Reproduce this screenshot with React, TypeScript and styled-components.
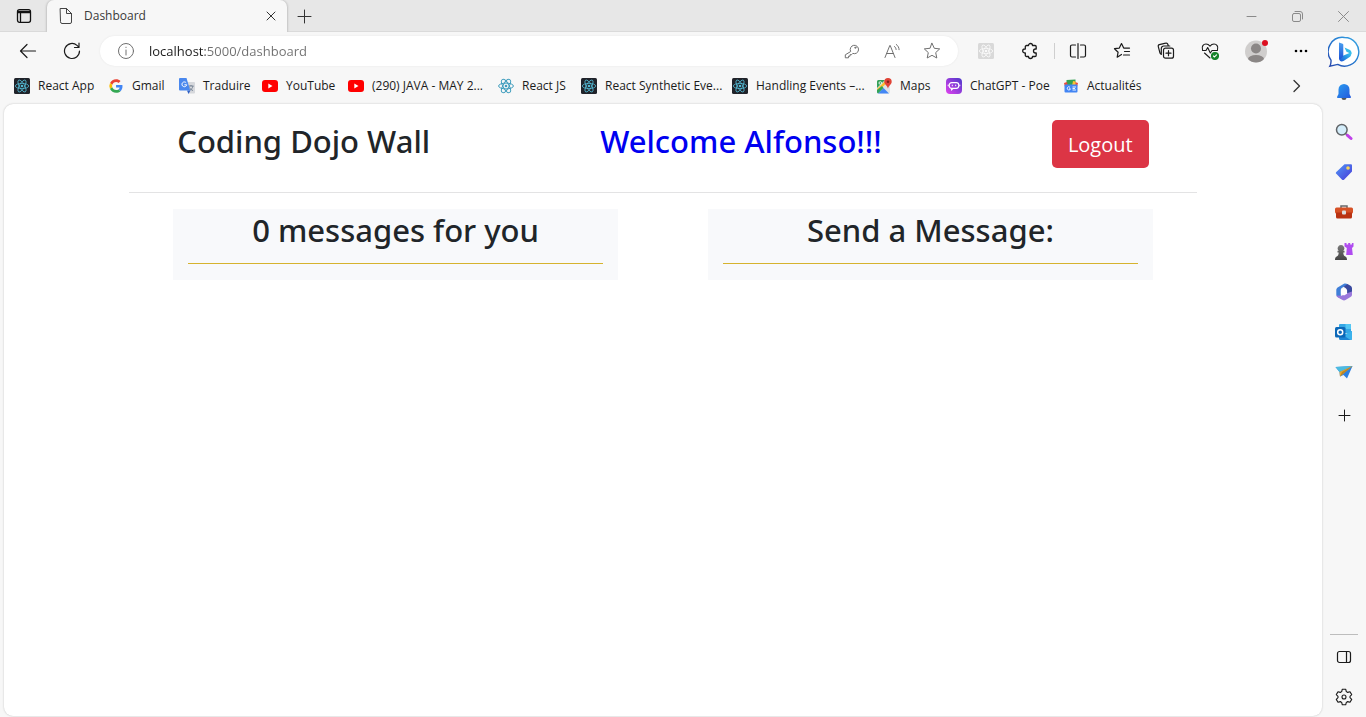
import React from 'react';
import styled, { createGlobalStyle } from 'styled-components';

const GlobalStyle = createGlobalStyle`
  *, *::before, *::after { box-sizing: border-box; }
  body {
    margin: 0;
    background: #f7f7f7;
    color: #1b1b1b;
    font-family: "Open Sans", "Noto Sans", sans-serif;
    font-size: 12px;
  }
  button { font: inherit; color: inherit; }
  svg { display: block; flex: none; }
`;

const Window = styled.div`
  display: flex;
  flex-direction: column;
  min-height: 100vh;
`;

const TitleBar = styled.header`
  display: flex;
  height: 32px;
  background: #e7e7e7;
  box-shadow: inset 0 -1px 0 #dadada;
`;

const IconButton = styled.button<{ $w?: number; $h?: number }>`
  display: flex;
  flex: none;
  align-items: center;
  justify-content: center;
  width: ${(p) => p.$w ?? 44}px;
  height: ${(p) => p.$h ?? 32}px;
  padding: 0;
  border: 0;
  background: none;
`;

const Tab = styled.div`
  display: flex;
  align-items: center;
  width: 240px;
  padding-left: 11px;
  background: #f7f7f7;
  border-radius: 7px 7px 0 0;
  box-shadow: -1px 0 2px #c4c4c4, 1px 0 2px #c4c4c4;
  clip-path: inset(0 -3px);
`;

const TabTitle = styled.span`
  flex: 1;
  padding-left: 10px;
  color: #3a3a3a;
  line-height: 16px;
`;

const WindowControls = styled.div`
  display: flex;
  margin-left: auto;
  color: #8a8a8a;
`;

const Body = styled.div`
  display: flex;
  flex: 1;
`;

const Main = styled.div`
  display: flex;
  flex: 1;
  flex-direction: column;
  min-width: 0;
`;

const Toolbar = styled.div`
  display: flex;
  align-items: center;
  height: 38px;
  padding-left: 6px;
`;

const AddressBar = styled.div`
  display: flex;
  flex: 1;
  align-items: center;
  height: 30px;
  margin: 0 6px;
  padding: 0 6px 0 17px;
  background: #fff;
  border-radius: 15px;
  box-shadow: 0 0 2px #e4e4e4;
`;

const AddressInput = styled.input`
  flex: 1;
  min-width: 0;
  margin-left: 14px;
  padding: 0;
  border: 0;
  outline: 0;
  font: 13px "Open Sans", "Noto Sans", sans-serif;
  color: transparent;
  background: linear-gradient(90deg, #1b1b1b 56px, #6f6f6f 56px);
  background-clip: text;
  -webkit-background-clip: text;
`;

const Separator = styled.span`
  width: 1px;
  height: 16px;
  margin: 0 1px 0 2px;
  background: #cfcfcf;
`;

const Bookmarks = styled.nav`
  display: flex;
  align-items: center;
  height: 34px;
  padding: 0 0 2px 14px;
`;

const Bookmark = styled.a<{ $w: number }>`
  display: flex;
  flex: none;
  align-items: center;
  gap: 8px;
  width: ${(p) => p.$w}px;
  color: #1b1b1b;
  font-size: 12px;
  line-height: 16px;
  text-decoration: none;
  white-space: nowrap;
`;

const MoreBookmarks = styled(IconButton)`
  margin-left: auto;
  margin-right: 10px;
`;

const Viewport = styled.main`
  flex: 1;
  margin: 0 1px 1px 4px;
  background: #fff;
  border-radius: 9px;
  box-shadow: 0 0 2px #bdbdbd;
`;

const Container = styled.div`
  width: 81%;
  margin: 0 auto;
  color: #212529;
`;

const Heading = styled.h2<{ $color?: string }>`
  margin: 0;
  color: ${(p) => p.$color ?? '#212529'};
  font: 500 31px/42px "Noto Sans", "Open Sans", sans-serif;
  text-align: center;
  white-space: nowrap;
`;

const PageHeader = styled.header`
  display: flex;
  align-items: flex-start;
  justify-content: space-between;
  padding: 16px 48px 24px;
  border-bottom: 1px solid #e3e3e4;
`;

const LogoutButton = styled.button`
  width: 97px;
  height: 48px;
  padding: 2px 0 0;
  border: 0;
  border-radius: 5px;
  background: #dc3545;
  color: #fff;
  font: 20px/30px "Open Sans", "Noto Sans", sans-serif;
`;

const Columns = styled.div`
  display: flex;
  justify-content: space-between;
  padding: 16px 44px 0;
`;

const Card = styled.section`
  width: 45.4%;
  padding: 0 15px 16px;
  background: #f8f9fb;
`;

const CardHeading = styled.div`
  padding-bottom: 12px;
  border-bottom: 1px solid #d6b32e;
`;

const Sidebar = styled.aside`
  display: flex;
  flex-direction: column;
  width: 43px;
`;

const SidebarFoot = styled.div`
  display: flex;
  flex-direction: column;
  margin: auto 0 0 7px;
  width: 28px;
  align-items: center;
  padding-top: 2px;
  border-top: 1px solid #bdbdbd;
`;

const Line = ({ size = 16, w = 1, color = 'currentColor', children }: { size?: number; w?: number; color?: string; children: React.ReactNode }) => (
  <svg width={size} height={size} viewBox={`0 0 ${size} ${size}`} fill="none" stroke={color} strokeWidth={w} strokeLinecap="round" strokeLinejoin="round">
    {children}
  </svg>
);

const Atom = ({ color, bg }: { color: string; bg?: string }) => (
  <svg width="16" height="16" viewBox="0 0 16 16" fill="none" stroke={color} strokeWidth={bg ? 0.8 : 1}>
    {bg && <rect width="16" height="16" rx="1.5" fill={bg} stroke="none" />}
    {[0, 60, 120].map((a) => (
      <ellipse key={a} cx="8" cy="8" rx={bg ? 6.7 : 7.4} ry={bg ? 2.6 : 2.9} transform={`rotate(${a} 8 8)`} />
    ))}
    <circle cx="8" cy="8" r="1.3" fill={color} stroke="none" />
  </svg>
);

const DarkAtom = () => <Atom color="#53b9d3" bg="#20232a" />;

const GoogleG = () => (
  <svg width="16" height="16" viewBox="0 0 48 48">
    <g transform="translate(4 4) scale(.84)">
      <path fill="#ea4335" d="M24 9.5c3.5 0 6.700 1.200 9.200 3.600l6.900-6.900C35.900 2.400 30.500 0 24 0 14.600 0 6.500 5.400 2.600 13.200l8 6.200C12.400 13.700 17.700 9.500 24 9.500z" />
      <path fill="#4285f4" d="M47 24.500c0-1.600-.2-3.100-.4-4.500H24v9h12.900c-.6 3-2.300 5.500-4.800 7.200l7.700 6C44.400 38 47 32 47 24.500z" />
      <path fill="#fbbc05" d="M10.500 28.600a14.500 14.500 0 0 1 0-9.200l-8-6.200a24 24 0 0 0 0 21.600z" />
      <path fill="#34a853" d="M24 48c6.500 0 11.900-2.100 15.900-5.800l-7.700-6c-2.200 1.500-4.900 2.300-8.200 2.300-6.300 0-11.600-4.200-13.500-9.900l-8 6.200C6.500 42.600 14.600 48 24 48z" />
    </g>
  </svg>
);

const Translate = () => (
  <svg width="16" height="16" viewBox="0 0 16 16" fill="none">
    <path d="M6 4h9a1 1 0 0 1 1 1v9.500a1 1 0 0 1-1 1h-5z" fill="#d6d8dc" />
    <path d="M9.500 8h5M12 7v1M14 8c-.4 2-1.800 3.500-3.500 4.500M10.500 9.500c.8 1.500 2 2.500 3.500 3" stroke="#6b7a8c" strokeWidth=".9" />
    <path d="M8 12.500h3.500L9.500 16z" fill="#2f5fc4" />
    <path d="M1 0h6.500l3.700 12.500H1a1 1 0 0 1-1-1V1a1 1 0 0 1 1-1z" fill="#4a88ee" />
    <path d="M7.200 4.800a2.400 2.400 0 1 0 .5 2H5.400" stroke="#fff" strokeWidth="1" />
  </svg>
);

const YouTube = () => (
  <svg width="16" height="16" viewBox="0 0 16 16">
    <rect y="2" width="16" height="12" rx="3" fill="#f00" />
    <path d="M6.300 5.500v5l4.200-2.500z" fill="#fff" />
  </svg>
);

const Maps = () => (
  <svg width="16" height="16" viewBox="0 0 16 16">
    <rect x="1" y="2" width="13" height="13.500" rx="1.500" fill="#dfe3e6" />
    <path d="M2.500 2H9L1 10V3.500A1.500 1.500 0 0 1 2.500 2z" fill="#34a058" />
    <path d="M1 11l9-9 2 2-11 10z" fill="#fbc02d" />
    <path d="M2 15.500l5.500-5.500 5.500 5.500z" fill="#4387f5" />
    <path d="M1 12v2.500l1 1 5.500-5.500-1.500-2z" fill="#2fa35b" />
    <circle cx="4.300" cy="5" r="1.300" fill="none" stroke="#fff" strokeWidth=".8" />
    <path d="M12 0a3.700 3.700 0 0 1 3.700 3.700c0 2.500-3 3.500-3.700 7-.7-3.500-3.700-4.500-3.700-7A3.700 3.700 0 0 1 12 0z" fill="#e04336" />
    <circle cx="12" cy="3.700" r="1.300" fill="#80201b" />
  </svg>
);

const Poe = () => (
  <svg width="16" height="16" viewBox="0 0 16 16">
    <defs>
      <linearGradient id="poe" x1="0" x2="1" y1="1" y2="0">
        <stop stopColor="#e142ee" />
        <stop offset="1" stopColor="#4b38c9" />
      </linearGradient>
    </defs>
    <rect width="16" height="16" rx="4" fill="url(#poe)" />
    <rect x="3.200" y="4.700" width="9.600" height="5.600" rx="2.500" fill="none" stroke="#fff" strokeWidth="1.200" />
    <path d="M6.300 6.700v1.500M9.700 6.700v1.500M2.200 6.700v1.500M13.800 6.700v1.500" stroke="#fff" />
    <path d="M5 10.500h3l-3 2.500z" fill="#fff" />
  </svg>
);

const News = () => (
  <svg width="16" height="16" viewBox="0 0 16 16">
    <path d="M3.500 2l9-.5v6h-9z" fill="#35a052" />
    <path d="M1 5l3-1 1 5H2zM12 4l3 1-1 4-3-1z" fill="#ea4b3c" />
    <path d="M10 3l2.500.5V8H9z" fill="#fbc234" />
    <rect x="1.500" y="6.500" width="13" height="8" rx="1" fill="#4285f4" />
    <path d="M7 9.300a1.600 1.600 0 1 0 .4 1.500H6M9.500 9h3.500M9.500 10.500h2.500M9.500 12h3.500" stroke="#fff" strokeWidth=".9" fill="none" />
  </svg>
);

const ReadAloud = () => (
  <Line size={18} color="#707070">
    <path d="M2 15.500L6.800 3.500h.4l4.800 12M3.600 11.500h6.800M11.500 4.500c1 .8 1.500 1.800 1.600 3M13.300 2.500c1.800 1.300 2.700 3 2.800 5.200" />
  </Line>
);

const Avatar = () => (
  <svg width="24" height="24" viewBox="0 0 24 24">
    <defs>
      <clipPath id="face"><circle cx="12" cy="12.500" r="11" /></clipPath>
    </defs>
    <circle cx="12" cy="12.500" r="11" fill="#d0cecd" />
    <g clipPath="url(#face)" fill="#8b8786">
      <circle cx="12" cy="9.500" r="5" />
      <ellipse cx="12" cy="20" rx="8" ry="4" />
    </g>
    <circle cx="21" cy="4" r="3" fill="#dc0f20" />
  </svg>
);

const Bing = () => (
  <svg width="32" height="32" viewBox="0 0 32 32">
    <defs>
      <linearGradient id="ring" x1="0" x2="1" y1="1" y2="0">
        <stop stopColor="#2846ab" />
        <stop offset=".5" stopColor="#2478cf" />
        <stop offset="1" stopColor="#3ba9e4" />
      </linearGradient>
      <linearGradient id="stem" x1="0" x2="0" y1="0" y2="1">
        <stop stopColor="#4a9ff0" />
        <stop offset="1" stopColor="#1c52d6" />
      </linearGradient>
      <linearGradient id="bowl" x1="0" x2="1" y1="1" y2="0">
        <stop stopColor="#1b50d4" />
        <stop offset=".4" stopColor="#2386e0" />
        <stop offset="1" stopColor="#3fd0ef" />
      </linearGradient>
    </defs>
    <path d="M16.500 1.500a14.300 14.300 0 1 1-6.800 26.900L1.800 30.300c1-2 1.400-4 1.200-6.200A14.300 14.300 0 0 1 16.500 1.500z" fill="#fff" stroke="url(#ring)" strokeWidth="1.400" />
    <path d="M11 22.500l4.500-3 7.700-3.200c.5 2.500-.3 4-1.900 5L15.500 25c-2.500 1.300-4.500-.5-4.500-2.500z" fill="url(#bowl)" />
    <path d="M11 6.500l3.600 1.300c.5.200.7.500.7 1V20.500L12.500 23c-1 .6-1.500.2-1.500-.8z" fill="url(#stem)" />
    <path d="M16.500 11.500l5 2.200c1.700.9 2.200 2.500 2 4.300L18.500 15.700z" fill="#37bce9" />
  </svg>
);

const Bell = () => (
  <svg width="18" height="18" viewBox="0 0 18 18">
    <defs>
      <linearGradient id="bell" x1="0" x2="1" y1="0" y2="1">
        <stop stopColor="#2a9cf0" />
        <stop offset="1" stopColor="#2459dc" />
      </linearGradient>
    </defs>
    <path d="M6.500 15h5a2.500 2 0 0 1-5 0z" fill="#555" />
    <path d="M9 1a5.500 5.500 0 0 1 5.500 5.500V11l1.500 3c0 .8-.5 1-1 1H3c-.5 0-1-.2-1-1l1.500-3V6.500A5.500 5.500 0 0 1 9 1z" fill="url(#bell)" />
  </svg>
);

const Magnifier = () => (
  <svg width="18" height="18" viewBox="0 0 18 18">
    <path d="M11 11l1.500 1.500" stroke="#505358" strokeWidth="2" />
    <path d="M12.500 12.300L16 15.500" stroke="#c040ea" strokeWidth="3" strokeLinecap="round" />
    <circle cx="6.800" cy="6.800" r="5.300" fill="#d4edfa" stroke="#606468" strokeWidth="1.500" />
  </svg>
);

const Tag = () => (
  <svg width="18" height="18" viewBox="0 0 18 18">
    <defs>
      <linearGradient id="tag" x1="0" x2="1" y1="0" y2="1">
        <stop stopColor="#5298f6" />
        <stop offset="1" stopColor="#4838d8" />
      </linearGradient>
    </defs>
    <path d="M9.500 1.300h6.200c.8 0 1.300.5 1.300 1.300v5.900L9 16.700c-.6.5-1.300.5-1.900 0l-5.800-5.900c-.6-.6-.6-1.300 0-1.900z" fill="url(#tag)" />
    <circle cx="13" cy="5" r="1.800" fill="#f8d458" />
  </svg>
);

const Toolbox = () => (
  <svg width="18" height="18" viewBox="0 0 18 18">
    <path d="M6 5V3h6v2" stroke="#68686a" strokeWidth="1.500" fill="none" />
    <rect y="4.500" width="18" height="6" rx="1.500" fill="#d65126" />
    <path d="M1 9.500h16v4.500a1.500 1.500 0 0 1-1.500 1.500h-13A1.500 1.500 0 0 1 1 14z" fill="#b93212" />
    <rect x="7" y="7.500" width="4" height="4" rx="1" fill="#ddd" />
  </svg>
);

const Chess = () => (
  <svg width="20" height="20" viewBox="0 0 20 20">
    <defs>
      <linearGradient id="pawn" x1="0" x2="0" y1="0" y2="1">
        <stop stopColor="#7a7a7a" />
        <stop offset="1" stopColor="#444" />
      </linearGradient>
    </defs>
    <path d="M10.500 1h2v1.500h1.700V1h2v1.500h1.700V1h1.600v3.500L18 6l.8 7h-6.600l.6-7-2.300-1.500z" fill="#b04cf0" />
    <path d="M7 3a3.300 3.300 0 0 1 2.200 5.800h1.300v1.800H9.300c0 2 .5 3.200 2 3.900 1.200.6 1.700 1.600 1.700 3.500H1c0-1.900.5-2.900 1.700-3.500 1.500-.7 2-1.900 2-3.900H3.500V8.800h1.300A3.300 3.300 0 0 1 7 3z" fill="url(#pawn)" />
  </svg>
);

const Office = () => (
  <svg width="18" height="18" viewBox="0 0 18 18">
    <path d="M9 .8L3 4.200c-1 .6-1.700 1.600-1.700 2.800v4.500c0 1.200.5 2 1.500 2.600l3 1.500V7c0-1 .5-1.700 1.300-2.200L13 1.500C11.500.6 10.300.1 9 .8z" fill="#3f7fd8" />
    <path d="M12.500 1l3 1.700c1 .6 1.500 1.600 1.500 2.800V11l-5 .5V7.500c0-1-.4-1.700-1.200-2.200L8.500 3.800z" fill="#39499f" />
    <path d="M1.500 12.500l5 .2 5.500-2.500 5-1.700v3c0 1-.5 2-1.500 2.600l-5 2.900c-1 .5-2 .5-3 0L3 14.500c-.8-.5-1.300-1-1.500-2z" fill="#9a78dc" />
    <path d="M9 5.400l3.100 1.800v3.600L9 12.600l-3.100-1.800V7.200z" fill="#fff" />
  </svg>
);

const Outlook = () => (
  <svg width="18" height="18" viewBox="0 0 18 18">
    <rect x="4" y="1" width="12" height="9" rx="1" fill="#35a7e5" />
    <path d="M10.500 1H15a1 1 0 0 1 1 1v4h-5.500z" fill="#54c8f4" />
    <path d="M4 9l6 4 7-5v7.500a1.500 1.500 0 0 1-1.500 1.500h-10A1.500 1.500 0 0 1 4 15.500z" fill="#1d85d4" />
    <path d="M17 8v7.500a1.500 1.500 0 0 1-1.500 1.500L8 12z" fill="#3bb2ec" />
    <rect x="0" y="4" width="10.500" height="10.500" rx="1.500" fill="#0c68b8" />
    <circle cx="5.200" cy="9.200" r="2.500" fill="none" stroke="#fff" strokeWidth="1.500" />
  </svg>
);

const Plane = () => (
  <svg width="18" height="18" viewBox="0 0 18 18">
    <path d="M.5 4L17.500 3 12 15.500 8.500 12 5 13.500 4.500 9z" fill="#2c81e2" />
    <path d="M.5 4L17.500 3 4.500 9z" fill="#4cbce0" />
    <path d="M17.500 3L4.500 9 5 13.500z" fill="#eba92b" />
    <path d="M17.500 3L5 13.500l2-4.500z" fill="#b88528" />
  </svg>
);

const Gear = () => (
  <Line size={18} w={1.1}>
    <path d="M7.300 1.200h3.400l.6 2.400 1.400.8 2.300-.7 1.700 2.900-1.700 1.700v1.400l1.700 1.700-1.700 2.900-2.300-.7-1.400.8-.6 2.400H7.300l-.6-2.400-1.400-.8-2.300.7-1.700-2.900L3 9.700V8.300L1.300 6.600 3 3.700l2.300.7 1.400-.8z" />
    <circle cx="9" cy="9" r="2" />
  </Line>
);

const bookmarks: { label: string; width: number; icon: React.ReactNode }[] = [
  { label: 'React App', width: 94, icon: <DarkAtom /> },
  { label: 'Gmail', width: 71, icon: <GoogleG /> },
  { label: 'Traduire', width: 83, icon: <Translate /> },
  { label: 'YouTube', width: 86, icon: <YouTube /> },
  { label: '(290) JAVA - MAY 2...', width: 150, icon: <YouTube /> },
  { label: 'React JS', width: 83, icon: <Atom color="#3f9dbd" /> },
  { label: 'React Synthetic Eve...', width: 151, icon: <DarkAtom /> },
  { label: 'Handling Events –...', width: 144, icon: <DarkAtom /> },
  { label: 'Maps', width: 70, icon: <Maps /> },
  { label: 'ChatGPT - Poe', width: 117, icon: <Poe /> },
  { label: 'Actualités', width: 90, icon: <News /> },
];

const apps: [string, React.ReactNode][] = [
  ['Notifications', <Bell />],
  ['Search', <Magnifier />],
  ['Shopping', <Tag />],
  ['Tools', <Toolbox />],
  ['Games', <Chess />],
  ['Microsoft 365', <Office />],
  ['Outlook', <Outlook />],
  ['Drop', <Plane />],
];

export default function App() {
  return (
    <Window>
      <GlobalStyle />
      <TitleBar>
        <IconButton $w={47} aria-label="Tab actions">
          <Line size={16} w={1.3} color="#111">
            <rect x="1.500" y="1.700" width="13" height="12.600" rx="2" />
            <path d="M2 3.300h12M2 4.500h12M4.500 5.500v8" />
          </Line>
        </IconButton>
        <Tab>
          <Line size={16} color="#444">
            <path d="M2.500 .500h6l5 5v8.500a1.500 1.500 0 0 1-1.500 1.500H4A1.500 1.500 0 0 1 2.500 14zM8.500 .500v5h5" />
          </Line>
          <TabTitle>Dashboard</TabTitle>
          <IconButton $w={32} aria-label="Close tab">
            <Line size={10} color="#333"><path d="M1 1l8 8M9 1l-8 8" /></Line>
          </IconButton>
        </Tab>
        <IconButton $w={34} aria-label="New tab">
          <Line size={15} color="#333"><path d="M7.500 1v13M1 7.500h13" /></Line>
        </IconButton>
        <WindowControls>
          <IconButton $w={46} aria-label="Minimize">
            <Line size={11}><path d="M1 5.500h9" /></Line>
          </IconButton>
          <IconButton $w={46} aria-label="Restore">
            <Line size={11}><rect x=".5" y="2.500" width="8" height="8" rx="1.500" /><path d="M3 .500h5a2.500 2.500 0 0 1 2.500 2.500v5" /></Line>
          </IconButton>
          <IconButton $w={46} aria-label="Close">
            <Line size={11}><path d="M.5.500l10 10M10.500.500l-10 10" /></Line>
          </IconButton>
        </WindowControls>
      </TitleBar>

      <Body>
        <Main>
          <Toolbar>
            <IconButton aria-label="Back">
              <Line size={18} w={1.2}><path d="M16.500 9h-15M8 2.500L1.500 9 8 15.500" /></Line>
            </IconButton>
            <IconButton aria-label="Refresh">
              <Line size={18} w={1.2}><path d="M16.500 9A7.500 7.500 0 1 1 14 3.400l1.800 1.800M16 1v4.500h-4.500" /></Line>
            </IconButton>
            <AddressBar>
              <Line size={18} color="#707070"><circle cx="9" cy="9" r="7.500" /><path d="M9 8v5M9 5.200v.3" /></Line>
              <AddressInput aria-label="Address" defaultValue="localhost:5000/dashboard" />
              <IconButton $w={40} $h={30} aria-label="Passwords">
                <Line size={16} color="#707070">
                  <path d="M6.500 8.200a4.200 4.200 0 1 1 2.300 2.200L7.500 11.700H6v1.500H4.500v1.600H1.300v-2.600z" />
                  <circle cx="11.300" cy="4.700" r=".6" />
                </Line>
              </IconButton>
              <IconButton $w={40} $h={30} aria-label="Read aloud"><ReadAloud /></IconButton>
              <IconButton $w={40} $h={30} aria-label="Add to favorites">
                <Line size={18} color="#707070"><path d="M9 1.300l2.300 5 5.400.6-4 3.700 1.100 5.400L9 13.300 4.200 16l1.100-5.400-4-3.700 5.400-.6z" /></Line>
              </IconButton>
            </AddressBar>
            <IconButton aria-label="React Developer Tools"><Atom color="#fafafa" bg="#d9d9d9" /></IconButton>
            <IconButton aria-label="Extensions">
              <Line size={18} w={1.3}>
                <path d="M5.500 3.500h2a2 2 0 0 1 4 0H14a1.200 1.200 0 0 1 1.200 1.200V7h-.7a2 2 0 0 0 0 4h.7v2.300a1.200 1.200 0 0 1-1.200 1.200h-2.500a2 2 0 0 1-4 0h-2a1.200 1.200 0 0 1-1.200-1.200V11h-.6a2 2 0 0 1 0-4h.6V4.700A1.200 1.200 0 0 1 5.500 3.500z" />
              </Line>
            </IconButton>
            <Separator />
            <IconButton aria-label="Split screen">
              <Line size={18} w={1.2}><path d="M6.500 3H3a1.500 1.500 0 0 0-1.500 1.500v9A1.500 1.500 0 0 0 3 15h3.500M11.500 3H15a1.500 1.500 0 0 1 1.500 1.500v9A1.500 1.500 0 0 1 15 15h-3.500M9 1.500v15" /></Line>
            </IconButton>
            <IconButton aria-label="Favorites">
              <Line size={18} w={1.2}><path d="M8.500 12.500l-4.300 2.700.9-5L1.500 6.700l4.800-.6L8.500 1.600l2.200 4.500h5.800M11.500 9.500h5M10.500 13h6" /></Line>
            </IconButton>
            <IconButton aria-label="Collections">
              <Line size={18} w={1.2}><rect x="6.500" y="6.200" width="10" height="10" rx="2" /><path d="M11.500 8.700v5M9 11.200h5M4.300 12.300c-.7-.1-1.100-.6-1.300-1.200L1.300 4.700c-.3-1 .2-1.800 1-2l6.500-1.500c1-.3 1.700.1 2 1l.5 1.600M4.300 12V6.500a2.500 2.500 0 0 1 2.500-2.500h6" /></Line>
            </IconButton>
            <IconButton aria-label="Browser essentials">
              <Line size={18} w={1.1}>
                <path d="M1.500 7.500C.5 4.500 2.300 2 5 2c1.800 0 3 .9 4 2.200C10 2.900 11.200 2 13 2c2.700 0 4.500 2.500 3.500 5.500M1.500 8.500H5l1.700-3 2.600 5.500 1.700-2.500h5.500M3.500 11L9 16" />
                <circle cx="14" cy="14" r="3.500" fill="#18832b" stroke="#18832b" />
                <path d="M12.500 14l1 1 2-2.200" stroke="#fff" />
              </Line>
            </IconButton>
            <IconButton $w={47} aria-label="Profile"><Avatar /></IconButton>
            <IconButton aria-label="Settings and more">
              <svg width="16" height="4" viewBox="0 0 16 4"><circle cx="3" cy="2" r="1.300" /><circle cx="8" cy="2" r="1.300" /><circle cx="13" cy="2" r="1.300" /></svg>
            </IconButton>
          </Toolbar>

          <Bookmarks aria-label="Favorites bar">
            {bookmarks.map((b) => (
              <Bookmark key={b.label} href="#" $w={b.width}>
                {b.icon}
                {b.label}
              </Bookmark>
            ))}
            <MoreBookmarks $w={32} aria-label="More favorites">
              <Line size={14} w={1.3} color="#333"><path d="M4 1.500L9.500 7 4 12.500" /></Line>
            </MoreBookmarks>
          </Bookmarks>

          <Viewport>
            <Container>
              <PageHeader>
                <Heading>Coding Dojo Wall</Heading>
                <Heading $color="#0000f0">Welcome Alfonso!!!</Heading>
                <LogoutButton>Logout</LogoutButton>
              </PageHeader>
              <Columns>
                <Card>
                  <CardHeading><Heading>0 messages for you</Heading></CardHeading>
                </Card>
                <Card>
                  <CardHeading><Heading>Send a Message:</Heading></CardHeading>
                </Card>
              </Columns>
            </Container>
          </Viewport>
        </Main>

        <Sidebar>
          <IconButton $w={42} $h={40} aria-label="Bing chat"><Bing /></IconButton>
          {apps.map(([name, icon]) => (
            <IconButton key={name} $w={42} $h={40} aria-label={name}>{icon}</IconButton>
          ))}
          <IconButton $w={42} $h={46} aria-label="Customize">
            <Line size={13}><path d="M6.500 1v11M1 6.500h11" /></Line>
          </IconButton>
          <SidebarFoot>
            <IconButton $w={28} $h={40} aria-label="Hide sidebar">
              <Line size={16} w={1.2}><rect x="1.500" y="2.500" width="13" height="11" rx="2" /><path d="M10.500 2.500v11" /></Line>
            </IconButton>
            <IconButton $w={28} $h={40} aria-label="Settings"><Gear /></IconButton>
          </SidebarFoot>
        </Sidebar>
      </Body>
    </Window>
  );
}
